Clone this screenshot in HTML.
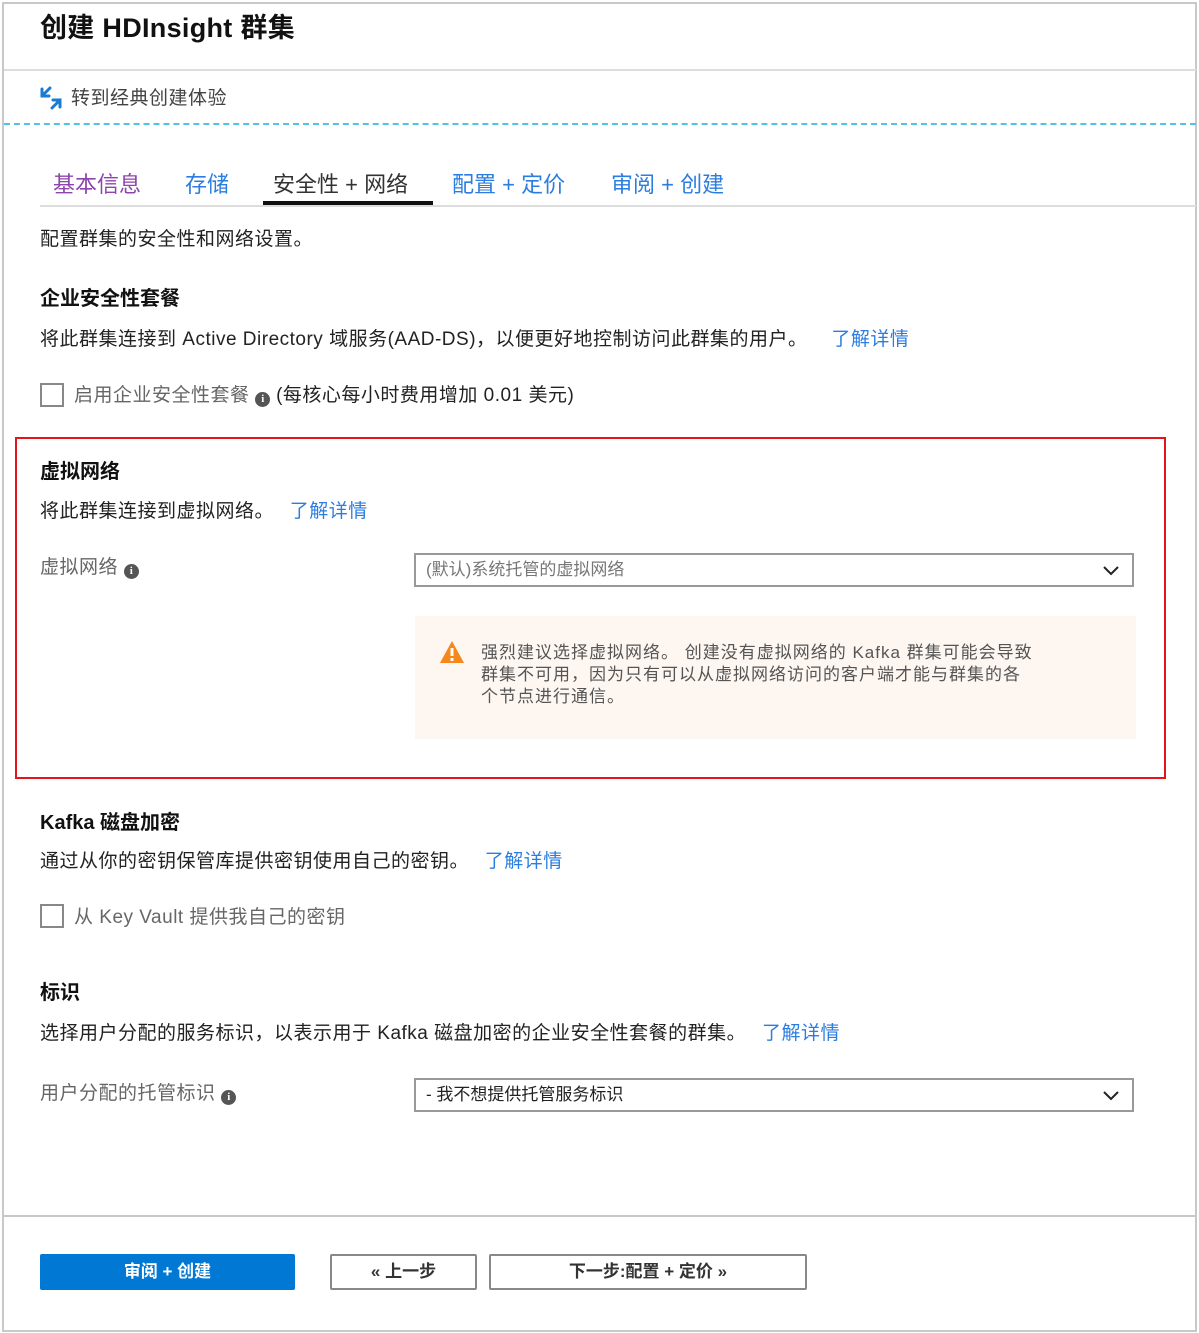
<!DOCTYPE html>
<html><head><meta charset="utf-8">
<style>
*{margin:0;padding:0;box-sizing:border-box}
body{width:1199px;height:1333px;background:#fff;font-family:"Liberation Sans","Noto Sans CJK SC",sans-serif;color:#222;position:relative;overflow:hidden}
.a{position:absolute;white-space:nowrap}
.t{font-size:19px;line-height:24px;letter-spacing:0.5px}
.h{font-size:20px;font-weight:bold;color:#111}
.lnk{color:#2b7de0}
.gray{color:#666}
.info{display:inline-block;width:15px;height:15px;border-radius:50%;background:#555;color:#fff;font-size:11px;line-height:15px;text-align:center;font-weight:bold;font-family:"Liberation Serif",serif;vertical-align:-1px;letter-spacing:0}
.cb{position:absolute;width:24px;height:24px;border:2px solid #888;background:#fff}
.sel{position:absolute;border:2px solid #999;background:#fff;height:34px;font-size:17px;line-height:30px;padding-left:10px}
.chev{position:absolute;right:12px;top:8px}
</style></head><body>
<div class="a" style="left:2px;top:2px;width:1195px;height:1330px;border:2px solid #c8c8c8"></div>
<div class="a" style="left:40px;top:10px;font-size:27px;font-weight:bold;color:#111;line-height:36px;letter-spacing:0.3px">创建 HDInsight 群集</div>
<div class="a" style="left:4px;top:69px;width:1192px;height:2px;background:#ddd"></div>
<svg class="a" style="left:38px;top:86px" width="26" height="24" viewBox="0 0 26 24"><g stroke="#1a7ad4" stroke-width="3" fill="none" stroke-linecap="round"><path d="M4 3 L4 10 L11 10 M4 10 L12 2"/><path d="M22 21 L22 14 L15 14 M22 14 L14 22"/></g></svg>
<div class="a t" style="left:71px;top:87px;color:#444">转到经典创建体验</div>
<div class="a" style="left:4px;top:123px;width:1192px;border-top:2px dashed #4fc3e8"></div>
<div class="a" style="left:40px;top:205px;width:1156px;height:2px;background:#ddd"></div>
<div class="a" style="left:53px;top:167px;font-size:22px;color:#8e44ad">基本信息</div>
<div class="a lnk" style="left:185px;top:167px;font-size:22px">存储</div>
<div class="a" style="left:273px;top:167px;font-size:22px;color:#333">安全性 + 网络</div>
<div class="a" style="left:263px;top:201px;width:170px;height:4px;background:#111"></div>
<div class="a lnk" style="left:452px;top:167px;font-size:22px">配置 + 定价</div>
<div class="a lnk" style="left:611px;top:167px;font-size:22px">审阅 + 创建</div>
<div class="a t" style="left:40px;top:228px">配置群集的安全性和网络设置。</div>
<div class="a h" style="left:40px;top:282px">企业安全性套餐</div>
<div class="a t" style="left:40px;top:328px">将此群集连接到 Active Directory 域服务(AAD-DS)，以便更好地控制访问此群集的用户。 <span class="lnk" style="margin-left:18px">了解详情</span></div>
<div class="cb" style="left:40px;top:383px"></div>
<div class="a t" style="left:74px;top:384px"><span class="gray">启用企业安全性套餐</span> <span class="info">i</span> (每核心每小时费用增加 0.01 美元)</div>
<div class="a" style="left:15px;top:437px;width:1151px;height:342px;border:2px solid #e3141c"></div>
<div class="a h" style="left:40px;top:455px">虚拟网络</div>
<div class="a t" style="left:40px;top:500px">将此群集连接到虚拟网络。 <span class="lnk" style="margin-left:10px">了解详情</span></div>
<div class="a t gray" style="left:40px;top:556px">虚拟网络 <span class="info">i</span></div>
<div class="sel" style="left:414px;top:553px;width:720px;color:#777">(默认)系统托管的虚拟网络<svg class="chev" width="18" height="14" viewBox="0 0 18 14"><path d="M2 4 L9 11 L16 4" stroke="#222" stroke-width="2" fill="none"/></svg></div>
<div class="a" style="left:415px;top:616px;width:721px;height:123px;background:#fdf6f1"></div>
<svg class="a" style="left:439px;top:640px" width="26" height="24" viewBox="0 0 26 24"><path d="M13 1 L25 23 L1 23 Z" fill="#f7861b"/><rect x="11.5" y="8" width="3" height="8" fill="#fff"/><rect x="11.5" y="18" width="3" height="3" fill="#fff"/></svg>
<div class="a" style="left:481px;top:642px;font-size:17px;line-height:22px;color:#555;letter-spacing:1px">强烈建议选择虚拟网络。 创建没有虚拟网络的 Kafka 群集可能会导致<br>群集不可用，因为只有可以从虚拟网络访问的客户端才能与群集的各<br>个节点进行通信。</div>
<div class="a h" style="left:40px;top:806px">Kafka 磁盘加密</div>
<div class="a t" style="left:40px;top:850px">通过从你的密钥保管库提供密钥使用自己的密钥。 <span class="lnk" style="margin-left:10px">了解详情</span></div>
<div class="cb" style="left:40px;top:904px"></div>
<div class="a t gray" style="left:74px;top:906px">从 Key Vault 提供我自己的密钥</div>
<div class="a h" style="left:40px;top:976px">标识</div>
<div class="a t" style="left:40px;top:1022px">选择用户分配的服务标识，以表示用于 Kafka 磁盘加密的企业安全性套餐的群集。 <span class="lnk" style="margin-left:10px">了解详情</span></div>
<div class="a t gray" style="left:40px;top:1082px">用户分配的托管标识 <span class="info">i</span></div>
<div class="sel" style="left:414px;top:1078px;width:720px;color:#222">- 我不想提供托管服务标识<svg class="chev" width="18" height="14" viewBox="0 0 18 14"><path d="M2 4 L9 11 L16 4" stroke="#222" stroke-width="2" fill="none"/></svg></div>
<div class="a" style="left:4px;top:1215px;width:1192px;height:2px;background:#c8c8c8"></div>
<div class="a" style="left:40px;top:1254px;width:255px;height:36px;background:#0078d4;border-radius:2px;color:#fff;font-weight:bold;font-size:17px;line-height:36px;text-align:center">审阅 + 创建</div>
<div class="a" style="left:330px;top:1254px;width:147px;height:36px;border:2px solid #888;border-radius:2px;color:#333;font-weight:bold;font-size:17px;line-height:32px;text-align:center">« 上一步</div>
<div class="a" style="left:489px;top:1254px;width:318px;height:36px;border:2px solid #888;border-radius:2px;color:#333;font-weight:bold;font-size:17px;line-height:32px;text-align:center">下一步:配置 + 定价 »</div>
</body></html>
